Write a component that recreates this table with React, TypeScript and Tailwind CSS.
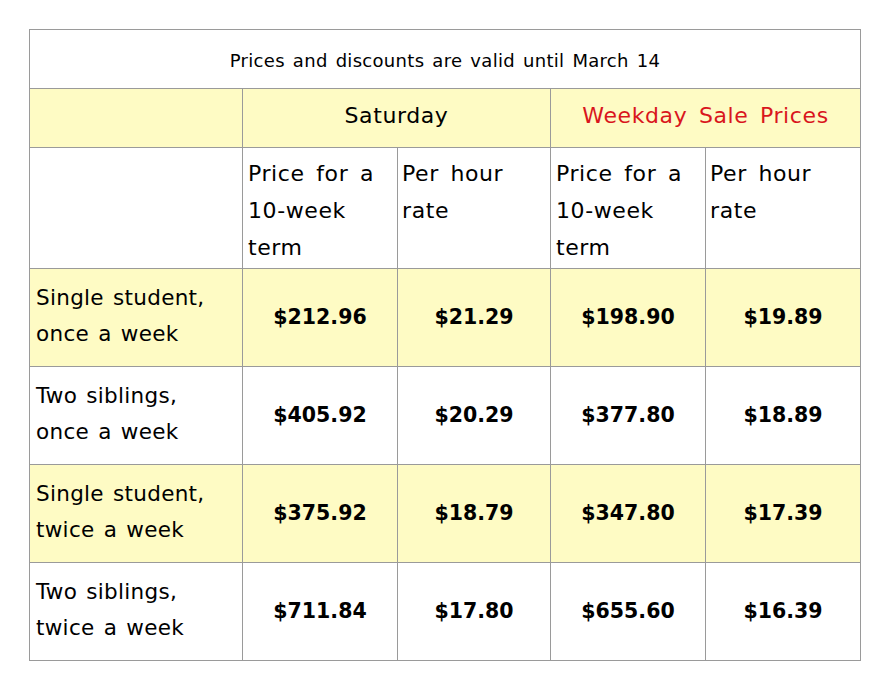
import React from 'react'

const rows = [
  { label: ['Single student,', 'once a week'], prices: ['$212.96', '$21.29', '$198.90', '$19.89'], yellow: true },
  { label: ['Two siblings,', 'once a week'], prices: ['$405.92', '$20.29', '$377.80', '$18.89'], yellow: false },
  { label: ['Single student,', 'twice a week'], prices: ['$375.92', '$18.79', '$347.80', '$17.39'], yellow: true },
  { label: ['Two siblings,', 'twice a week'], prices: ['$711.84', '$17.80', '$655.60', '$16.39'], yellow: false },
]

export default function App() {
  const cell = 'border border-[#9a9a9a] p-0'
  return (
    <div className="w-[889px] h-[688px] bg-white pt-[29px] pl-[29px] font-['DejaVu_Sans',sans-serif] text-black">
      <table className="border-collapse table-fixed w-[831px]">
        <colgroup>
          <col className="w-[213px]" />
          <col className="w-[155px]" />
          <col className="w-[153px]" />
          <col className="w-[155px]" />
          <col className="w-[155px]" />
        </colgroup>
        <tbody>
          <tr className="h-[59px]">
            <td colSpan={5} className={`${cell} text-center text-[18px] tracking-[0.3px] [word-spacing:2px] pt-[2px]`}>
              Prices and discounts are valid until March 14
            </td>
          </tr>
          <tr className="h-[59px] bg-[#fefbc4] text-[22px] tracking-[0.6px] [word-spacing:4px]">
            <td className={cell}></td>
            <td colSpan={2} className={`${cell} text-center pb-[6px]`}>Saturday</td>
            <td colSpan={2} className={`${cell} text-center text-[#d9161d] pb-[6px]`}>Weekday Sale Prices</td>
          </tr>
          <tr className="h-[121px] text-[22px] leading-[37px] align-top tracking-[0.6px] [word-spacing:4px]">
            <td className={cell}></td>
            {[0, 1].map((i) => (
              <React.Fragment key={i}>
                <td className={`${cell} pl-[5px] pt-[7px]`}>Price for a<br />10-week<br />term</td>
                <td className={`${cell} pl-[4px] pt-[7px]`}>Per hour<br />rate</td>
              </React.Fragment>
            ))}
          </tr>
          {rows.map((r, i) => (
            <tr key={i} className={`h-[98px] ${r.yellow ? 'bg-[#fefbc4]' : ''}`}>
              <td className={`${cell} pl-[6px] pb-[4px] text-[21.5px] leading-[36px] tracking-[0.3px] [word-spacing:2px]`}>
                {r.label[0]}<br />{r.label[1]}
              </td>
              {r.prices.map((p, j) => (
                <td key={j} className={`${cell} text-center text-[20.5px] font-bold`}>{p}</td>
              ))}
            </tr>
          ))}
        </tbody>
      </table>
    </div>
  )
}
